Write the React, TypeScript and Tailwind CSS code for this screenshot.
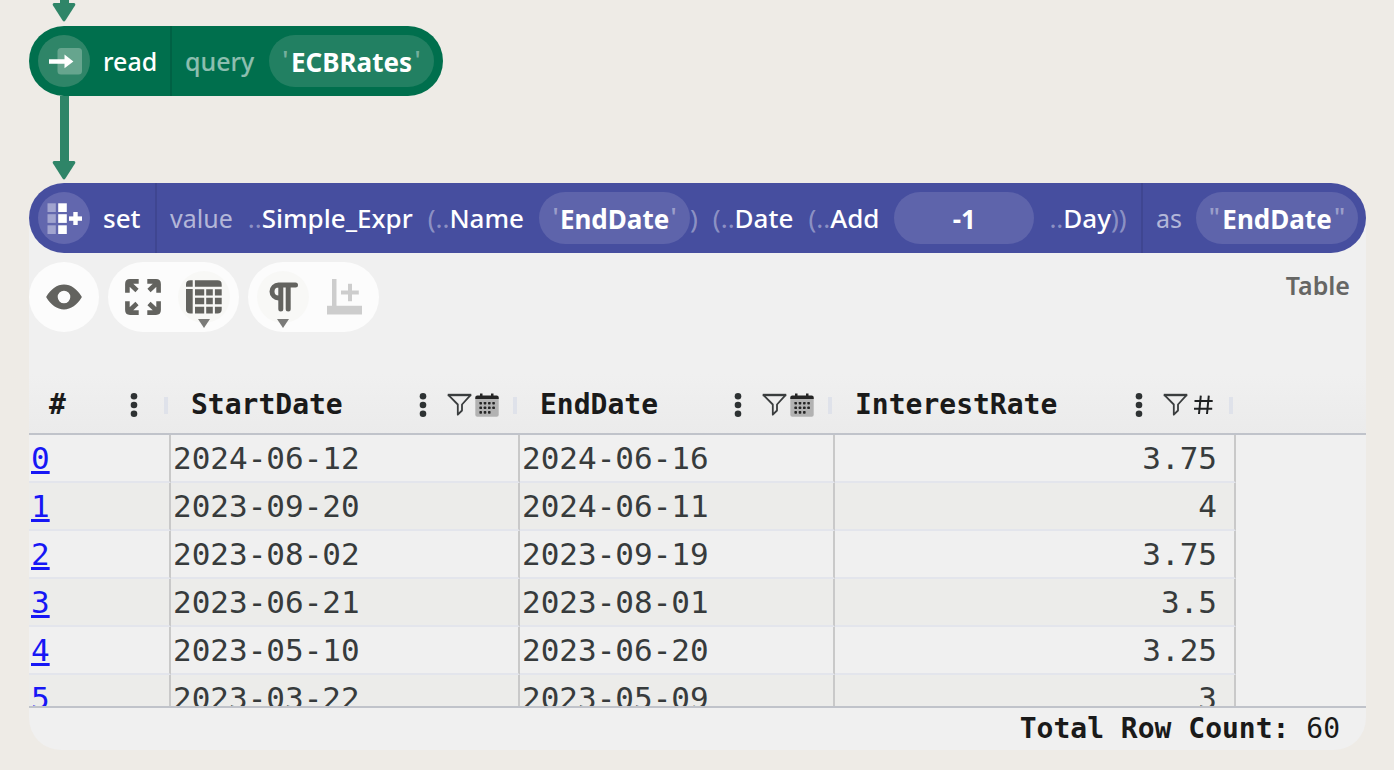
import type { ReactNode } from "react";

const rows = [
  { id: 0, start: "2024-06-12", end: "2024-06-16", rate: "3.75" },
  { id: 1, start: "2023-09-20", end: "2024-06-11", rate: "4" },
  { id: 2, start: "2023-08-02", end: "2023-09-19", rate: "3.75" },
  { id: 3, start: "2023-06-21", end: "2023-08-01", rate: "3.5" },
  { id: 4, start: "2023-05-10", end: "2023-06-20", rate: "3.25" },
  { id: 5, start: "2023-03-22", end: "2023-05-09", rate: "3" },
];

function ArrowHead() {
  return (
    <svg width="24" height="19" viewBox="0 0 24 19" className="block shrink-0" fill="#2f8568" aria-hidden="true">
      <path d="M2 0H22Q24 .6 23 2.6L13.4 17.4Q12 19.4 10.6 17.4L1 2.6Q0 .6 2 0Z" />
    </svg>
  );
}

function Connector({ className }: { className: string }) {
  return (
    <div className={`ml-[23px] flex w-6 flex-col items-center ${className}`}>
      <div className="w-[9px] flex-1 bg-[#2f8568]" />
      <ArrowHead />
    </div>
  );
}

function ReadIcon() {
  return (
    <svg width="52" height="52" viewBox="0 0 52 52" className="block shrink-0" aria-hidden="true">
      <circle cx="26" cy="26" r="26" fill="#2f8568" />
      <rect x="19.500" y="13" width="24.500" height="26.500" rx="3.500" fill="#66a58e" />
      <path d="M11 24.200H26.500V19.500L35.400 26.400L26.500 33.300V28.700H11Z" fill="#fff" />
    </svg>
  );
}

function SetIcon() {
  return (
    <svg width="52" height="52" viewBox="0 0 52 52" className="block shrink-0" aria-hidden="true">
      <circle cx="26" cy="26" r="26" fill="#6267ae" />
      <g fill="#a1a4cf">
        <rect x="9.5" y="11.3" width="8.3" height="8.7" />
        <rect x="9.5" y="22.2" width="8.3" height="8.7" />
        <rect x="9.5" y="33.3" width="8.3" height="8.7" />
      </g>
      <g fill="#fff">
        <rect x="20.2" y="11.3" width="8.6" height="8.7" />
        <rect x="20.2" y="22.2" width="8.6" height="8.7" />
        <rect x="20.2" y="33.3" width="8.6" height="8.7" />
        <rect x="31" y="24.4" width="13" height="4.4" />
        <rect x="35.3" y="20" width="4.4" height="13" />
      </g>
    </svg>
  );
}

function Param({
  label,
  value,
  quote,
  tone,
  inputWidth,
}: {
  label: string;
  value: string;
  quote?: string;
  tone: string;
  inputWidth: string;
}) {
  const mark = <span className="-mt-1.5 font-medium text-white/40">{quote}</span>;
  return (
    <label className={`flex h-[52px] shrink-0 items-center justify-center rounded-full pt-0.5 font-bold ${tone}`}>
      {quote && mark}
      <input
        aria-label={label}
        defaultValue={value}
        className={`bg-transparent text-center text-white outline-none ${inputWidth}`}
      />
      {quote && mark}
    </label>
  );
}

function Dim({ children }: { children: ReactNode }) {
  return <span className="font-normal text-white/40">{children}</span>;
}

function Caret() {
  return (
    <svg width="12" height="9" viewBox="0 0 12 9" className="absolute bottom-[-5px] left-5" fill="#7b7b79" aria-hidden="true">
      <path d="M0 0H12L6 9Z" />
    </svg>
  );
}

function ToolButton({ label, menu, children }: { label: string; menu?: boolean; children: ReactNode }) {
  return (
    <button
      type="button"
      aria-label={label}
      className={`relative flex size-[52px] items-center justify-center rounded-full ${menu ? "bg-[#f8f8f6]" : ""}`}
    >
      {children}
      {menu && <Caret />}
    </button>
  );
}

function EyeIcon() {
  return (
    <svg width="36" height="26" viewBox="0 0 36 26" fill="#63635f" fillRule="evenodd" aria-hidden="true">
      <path d="M.4 13.6Q0 13 .4 12.4C5 5 11 .5 18 .5S31 5 35.600 12.400Q36 13 35.600 13.600C31 21 25 25.500 18 25.500S5 21 .4 13.600ZM18 6.700A6.300 6.300 0 1 0 18 19.300A6.300 6.300 0 1 0 18 6.700Z" />
    </svg>
  );
}

function ExpandIcon() {
  return (
    <svg width="36" height="36" viewBox="0 0 36 36" fill="none" stroke="#63635f" strokeWidth="4.600" aria-hidden="true">
      <path d="M13.700 2.400H5Q2.400 2.400 2.400 5V13.700M3.500 3.500L12 11.500" />
      <path d="M22.300 2.400H31Q33.600 2.400 33.600 5V13.700M32.500 3.500L24 11.500" />
      <path d="M13.700 33.600H5Q2.400 33.600 2.400 31V22.300M3.500 32.500L12 24.500" />
      <path d="M22.300 33.600H31Q33.600 33.600 33.600 31V22.300M32.500 32.500L24 24.500" />
    </svg>
  );
}

function GridIcon() {
  return (
    <svg width="36" height="34" viewBox="0 0 36 34" fill="#63635f" aria-hidden="true">
      <path d="M6.700 .3V6.700H0V4.500Q0 .3 4.500 .3ZM8.900 .3H31.500Q35.700 .3 35.700 4.500V6.700H8.900ZM0 9H6.700V33.500H4.500Q0 33.500 0 29.500Z" />
      <path d="M9 9.200H18.200V15.400H9ZM20.200 9.200H26.800V15.400H20.200ZM28.900 9.200H35.700V15.400H28.900Z" />
      <path d="M9 17.800H18.200V24.300H9ZM20.200 17.800H26.800V24.300H20.200ZM28.900 17.800H35.700V24.300H28.900Z" />
      <path d="M9 26.700H18.200V33.500H9ZM20.200 26.700H26.800V33.500H20.200ZM28.900 26.700H35.700V29.500Q35.700 33.500 31.500 33.500H28.900Z" />
    </svg>
  );
}

function PilcrowIcon() {
  return (
    <svg width="29" height="30" viewBox="0 0 29 30" fill="none" stroke="#63635f" strokeWidth="5" strokeLinecap="round" aria-hidden="true">
      <path d="M26.500 3H9.500A6.500 6.500 0 0 0 9.500 16H11.500M11.800 3V27M19.200 3V27" />
    </svg>
  );
}

function AddChartIcon() {
  return (
    <svg width="35" height="36" viewBox="0 0 35 36" fill="#cdcdcd" aria-hidden="true">
      <path d="M5 0H9.500V26.800H35V35.500H0V26.800H5ZM21 4.800H25V11.500H31.800V15.500H25V22.300H21V15.500H14V11.500H21Z" />
    </svg>
  );
}

function DotsIcon() {
  return (
    <svg width="8" height="26" viewBox="0 0 8 26" fill="#2e3233" aria-hidden="true">
      <circle cx="4" cy="4.200" r="3.300" />
      <circle cx="4" cy="13" r="3.300" />
      <circle cx="4" cy="21.800" r="3.300" />
    </svg>
  );
}

function FilterIcon() {
  return (
    <svg width="25" height="24" viewBox="0 0 25 24" fill="none" stroke="#3a3d3e" strokeWidth="1.800" strokeLinejoin="round" aria-hidden="true">
      <path d="M1.500 2.200H23.500L15 11.500V17.500L10.800 21.700V11.500Z" />
      <path d="M.8 2H24.200" strokeWidth="2.400" />
    </svg>
  );
}

function CalendarIcon() {
  const dots: [number, number][] = [];
  for (let r = 0; r < 3; r++) {
    for (let c = 0; c < 4; c++) {
      if (r < 2 || c < 3) dots.push([5.700 + c * 4.300, 10.200 + r * 4.600]);
    }
  }
  return (
    <svg width="24" height="24" viewBox="0 0 24 24" aria-hidden="true">
      <rect x=".3" y="3" width="23.400" height="20.800" rx="2" fill="#b2b2b2" />
      <path d="M.3 6V4.500Q.3 2.500 2.300 2.500H5V.5H7.500V2.500H16V.5H18.500V2.500H21.700Q23.700 2.500 23.700 4.500V6Z" fill="#252525" />
      {dots.map(([x, y]) => (
        <rect key={`${x}-${y}`} x={x - 1.300} y={y - 1.300} width="2.600" height="2.600" rx=".7" fill="#252525" />
      ))}
    </svg>
  );
}

function HashIcon() {
  return (
    <svg width="24" height="24" viewBox="0 0 24 24" fill="none" stroke="#1f2122" strokeWidth="2" aria-hidden="true">
      <path d="M3.500 8H21.700M3 15.800H21.200M9.800 2.700L8 21M17.800 2.700L16 21" />
    </svg>
  );
}

function HeaderCell({ title, type }: { title: string; type?: ReactNode }) {
  return (
    <th scope="col" className="border-b-2 border-[#c0c3ca] p-0 text-left font-bold">
      <div className="flex h-[59px] items-center pt-[3px] pl-5 pr-[3px]">
        <span className="flex-1">{title}</span>
        <button type="button" aria-label={`${title} column menu`}>
          <DotsIcon />
        </button>
        {type && (
          <button type="button" aria-label={`Filter ${title}`} className="ml-5 flex items-center gap-[3px]">
            <FilterIcon />
            {type}
          </button>
        )}
        <span className={`h-[17px] w-1 bg-[#dfe2ea] ${type ? "ml-3.5" : "ml-[26px]"}`} />
      </div>
    </th>
  );
}

export default function App() {
  return (
    <main className="min-h-screen bg-[#eeebe6] pb-5 pl-[29px] pr-7 font-['Noto_Sans','Open_Sans',sans-serif] text-[26px] leading-8 font-medium text-white">
      <Connector className="h-[22px]" />

      <div className="mt-1 flex h-[70px] w-fit items-center rounded-full bg-[#006f4d] px-[9px]">
        <ReadIcon />
        <span className="flex h-full w-[82px] items-center border-r-2 border-[#006144] pl-[13px] text-[25px]">read</span>
        <span className="w-[97px] pl-[13px] text-[25px] text-white/55">query</span>
        <Param label="Query" value="ECBRates" quote="'" tone="w-[165px] bg-[#228062]" inputWidth="w-[126px]" />
      </div>

      <Connector className="h-[84px]" />

      <div className="relative z-10 mt-[3px] flex h-[70px] items-center rounded-full bg-[#464e9f] pl-[9px] pr-2">
        <SetIcon />
        <span className="flex h-full w-[67px] items-center border-r-2 border-[#3f4691] pl-[13px]">set</span>
        <div className="flex h-full flex-1 items-center gap-[15px] border-r-2 border-[#3f4691] pl-[13px] whitespace-nowrap">
          <span className="text-[25px] font-normal text-white/60">value</span>
          <span><Dim>..</Dim>Simple_Expr</span>
          <span><Dim>(..</Dim>Name</span>
          <span className="flex items-center">
            <Param label="Name" value="EndDate" quote="'" tone="w-[151px] bg-[#5e64ab]" inputWidth="w-[112px]" />
            <Dim>)</Dim>
          </span>
          <span><Dim>(..</Dim>Date</span>
          <span><Dim>(..</Dim>Add</span>
          <Param label="Days to add" value="-1" tone="w-[140px] bg-[#5e64ab]" inputWidth="w-[80px]" />
          <span><Dim>..</Dim>Day<Dim>))</Dim></span>
        </div>
        <span className="w-[53px] pl-[13px] text-[25px] font-normal text-white/60">as</span>
        <Param label="Target column" value="EndDate" quote={'"'} tone="w-[162px] bg-[#5e64ab]" inputWidth="w-[114px]" />
      </div>

      <section className="-mt-[35px] rounded-b-[32px] bg-[#f0f0f0] pt-11 font-['DejaVu_Sans_Mono',monospace] text-[28px] text-[#1a1a1a]">
        <div className="flex gap-[9px]">
          <div className="rounded-full bg-[#fcfcfc] p-[9px]">
            <ToolButton label="Preview"><EyeIcon /></ToolButton>
          </div>
          <div className="flex gap-[9px] rounded-full bg-[#fcfcfc] p-[9px]">
            <ToolButton label="Expand"><ExpandIcon /></ToolButton>
            <ToolButton label="Table view" menu><GridIcon /></ToolButton>
          </div>
          <div className="flex gap-[9px] rounded-full bg-[#fcfcfc] p-[9px]">
            <ToolButton label="Formatting" menu><PilcrowIcon /></ToolButton>
            <ToolButton label="Add chart"><AddChartIcon /></ToolButton>
          </div>
          <h2 className="ml-auto mr-4 mt-[7px] font-['Noto_Sans','Open_Sans',sans-serif] text-[25px] font-semibold text-[#666664]">Table</h2>
        </div>

        <div className="mt-[42px] h-[334px] overflow-auto border-b-2 border-[#c0c3ca] [scrollbar-width:none]">
          <table className="w-full table-fixed border-separate border-spacing-0">
            <colgroup>
              <col className="w-[142px]" />
              <col className="w-[349px]" />
              <col className="w-[315px]" />
              <col className="w-[401px]" />
              <col />
            </colgroup>
            <thead>
              <tr className="bg-linear-to-b from-[#f0f0f0] to-[#ebebeb]">
                <HeaderCell title="#" />
                <HeaderCell title="StartDate" type={<CalendarIcon />} />
                <HeaderCell title="EndDate" type={<CalendarIcon />} />
                <HeaderCell title="InterestRate" type={<HashIcon />} />
                <td className="border-b-2 border-[#c0c3ca]" />
              </tr>
            </thead>
            <tbody className="text-[31px] text-[#373b3c] [&_td]:h-12 [&_td]:border-r-2 [&_td]:border-b-2 [&_td]:border-r-[#c9c9c9] [&_td]:border-b-[#e3e5ec] [&_td]:py-0 [&_td]:pl-0.5 [&_td]:leading-[46px] [&_tr:nth-child(even)]:bg-[#ececea]">
              {rows.map((row) => (
                <tr key={row.id}>
                  <td>
                    <a href={`#row-${row.id}`} className="text-[#1717f5] underline">{row.id}</a>
                  </td>
                  <td>{row.start}</td>
                  <td>{row.end}</td>
                  <td className="pr-[17px] text-right">{row.rate}</td>
                  <th aria-hidden="true" className="bg-[#f0f0f0]" />
                </tr>
              ))}
            </tbody>
          </table>
        </div>

        <p className="pt-[5px] pr-[26px] pb-[5px] text-right">
          <strong className="font-bold">Total Row Count:</strong> 60
        </p>
      </section>
    </main>
  );
}
